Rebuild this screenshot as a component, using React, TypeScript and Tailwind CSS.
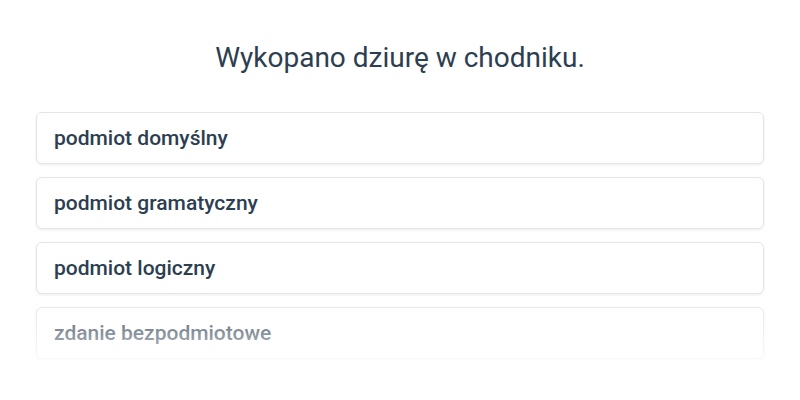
const options = [
  "podmiot domyślny",
  "podmiot gramatyczny",
  "podmiot logiczny",
  "zdanie bezpodmiotowe",
];

const App = () => {
  return (
    <div className="min-h-screen bg-white font-['Roboto',sans-serif] text-[#2c3e50]">
      <div className="px-9 pt-[38px]">
        <h1 className="text-center text-[28px] leading-[40px] font-normal">
          Wykopano dziurę w chodniku.
        </h1>
        <div className="relative mt-[34px] flex flex-col gap-[13px]">
          {options.map((option) => (
            <button
              key={option}
              className="h-[52px] w-full rounded-md border border-[#e3e5e8] bg-white px-[17px] pt-[2px] text-left text-[21px] font-medium shadow-[0_1px_3px_rgba(0,0,0,0.08)]"
            >
              {option}
            </button>
          ))}
          <div className="pointer-events-none absolute inset-x-[-4px] bottom-[-6px] h-[70px] bg-gradient-to-b from-white/0 to-white/80" />
        </div>
      </div>
    </div>
  );
};

export default App;
